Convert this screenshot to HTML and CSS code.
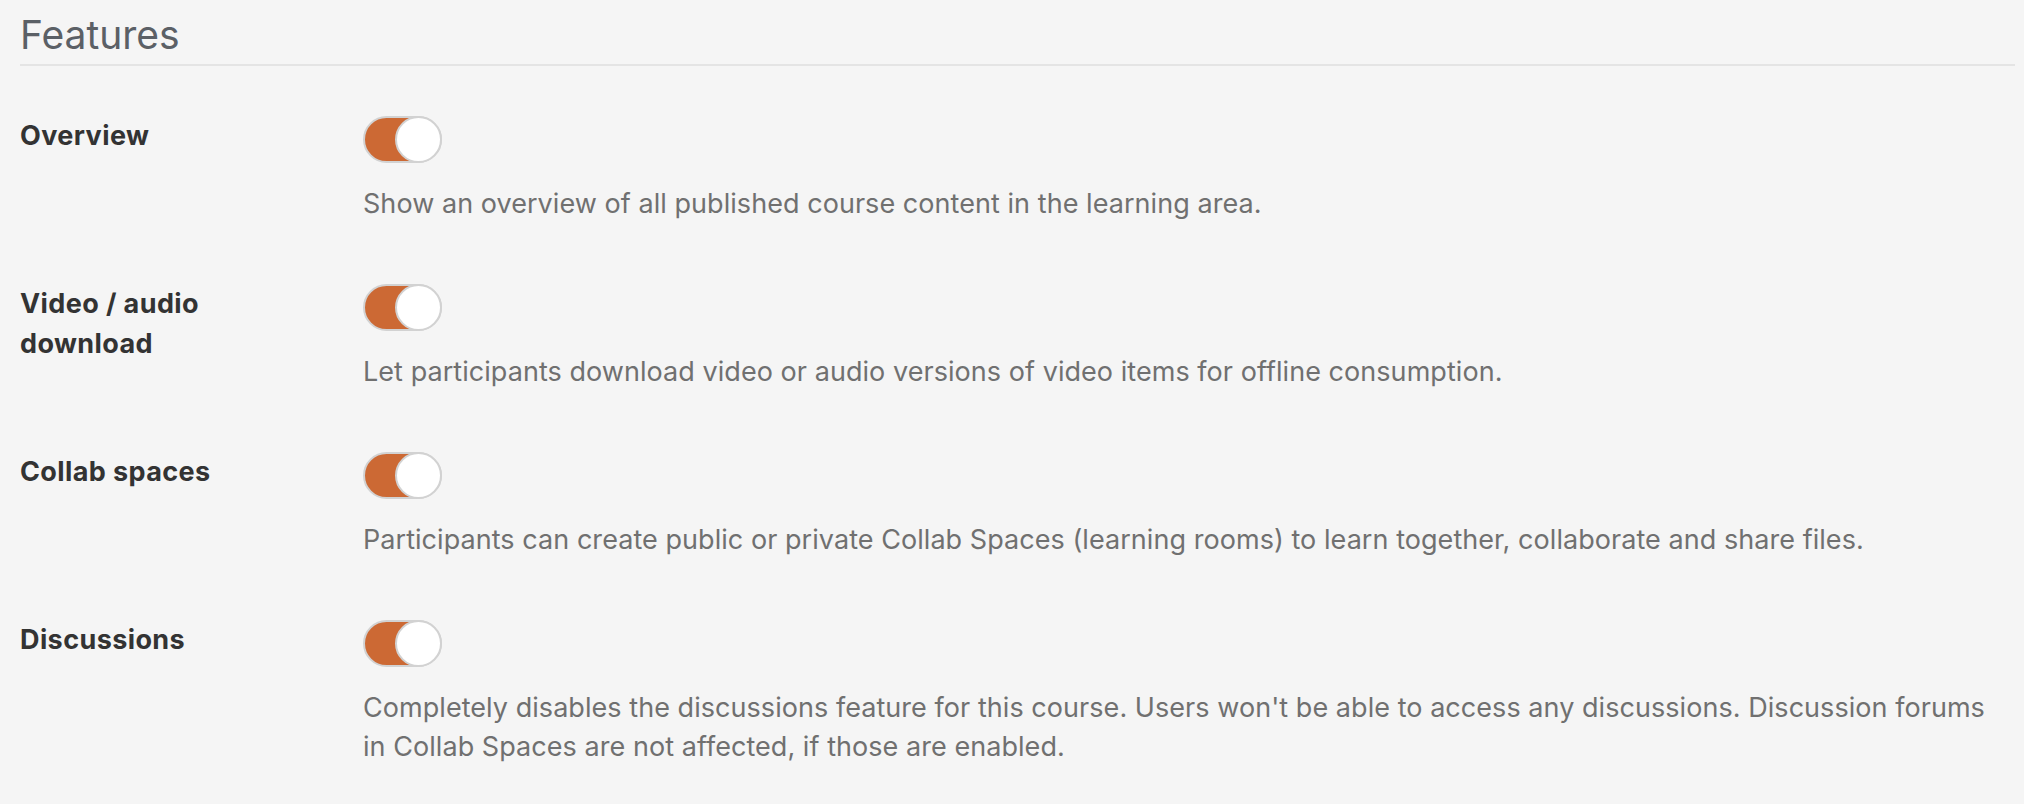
FILE: index.html
```html
<!DOCTYPE html>
<html lang="en">
<head>
<meta charset="utf-8">
<title>Features</title>
<link rel="stylesheet" href="styles.css">
</head>
<body>
<section class="features">
  <h2 class="features__title">Features</h2>
  <div class="setting">
    <div class="setting__label">Overview</div>
    <div class="setting__control">
      <span class="toggle toggle--on" role="switch" aria-checked="true"><span class="toggle__knob"></span></span>
      <p class="setting__desc">Show an overview of all published course content in the learning area.</p>
    </div>
  </div>
  <div class="setting">
    <div class="setting__label">Video / audio<br>download</div>
    <div class="setting__control">
      <span class="toggle toggle--on" role="switch" aria-checked="true"><span class="toggle__knob"></span></span>
      <p class="setting__desc">Let participants download video or audio versions of video items for offline consumption.</p>
    </div>
  </div>
  <div class="setting">
    <div class="setting__label">Collab spaces</div>
    <div class="setting__control">
      <span class="toggle toggle--on" role="switch" aria-checked="true"><span class="toggle__knob"></span></span>
      <p class="setting__desc">Participants can create public or private Collab Spaces (learning rooms) to learn together, collaborate and share files.</p>
    </div>
  </div>
  <div class="setting">
    <div class="setting__label">Discussions</div>
    <div class="setting__control">
      <span class="toggle toggle--on" role="switch" aria-checked="true"><span class="toggle__knob"></span></span>
      <p class="setting__desc">Completely disables the discussions feature for this course. Users won't be able to access any discussions. Discussion forums<br>in Collab Spaces are not affected, if those are enabled.</p>
    </div>
  </div>
</section>
</body>
</html>
```
FILE: styles.css
```css
* { box-sizing: border-box; }
html, body {
  margin: 0;
  background: #f5f5f5;
}
body {
  padding: 0 9px 0 20px;
  font-family: Inter, "Noto Sans", "Liberation Sans", sans-serif;
}
.features__title {
  margin: 0;
  padding-top: 11px;
  padding-bottom: 5px;
  font-size: 39px;
  line-height: 48px;
  font-weight: 400;
  color: #5b6066;
  border-bottom: 2px solid #e4e4e4;
}
.features {
  padding-bottom: 20px;
}
.setting {
  display: flex;
  margin-top: 50px;
}
.setting + .setting {
  margin-top: 61px;
}
.setting__label {
  width: 343px;
  flex: none;
  font-size: 27px;
  line-height: 40px;
  font-weight: 700;
  letter-spacing: 0.4px;
  color: #333333;
}
.setting__control {
  flex: 1;
  display: flex;
  flex-direction: column;
  align-items: flex-start;
}
.toggle {
  position: relative;
  display: block;
  width: 79px;
  height: 47px;
  border-radius: 24px;
  background: #cc6934;
  border: 2px solid #d2d2d2;
}
.toggle__knob {
  position: absolute;
  top: -2px;
  right: -2px;
  width: 47px;
  height: 47px;
  border-radius: 50%;
  background: #ffffff;
  border: 2px solid #d2d2d2;
}
.setting__desc {
  margin: 21px 0 0;
  font-size: 27px;
  line-height: 39px;
  letter-spacing: 0.05px;
  color: #707070;
}
```
